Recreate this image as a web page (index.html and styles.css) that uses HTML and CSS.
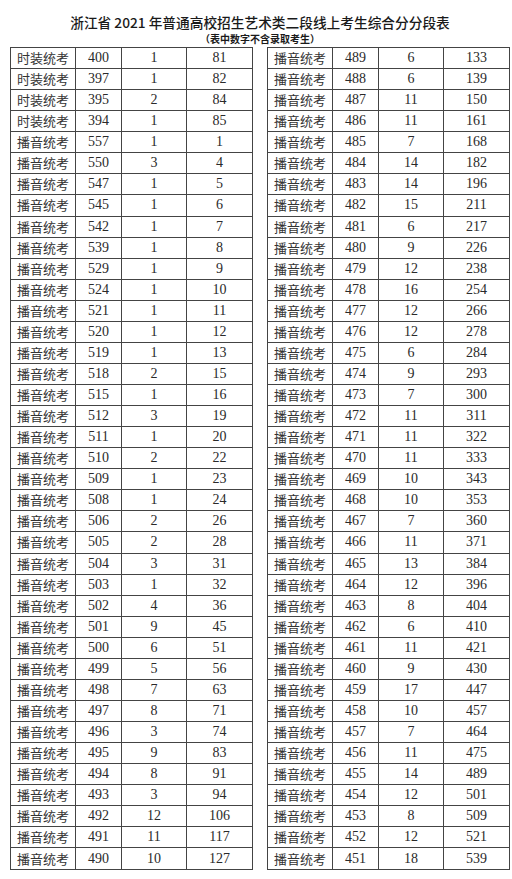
FILE: index.html
```html
<!DOCTYPE html>
<html lang="zh">
<head>
<meta charset="utf-8">
<link rel="stylesheet" href="styles.css">
</head>
<body>
<div class="page">
  <h1 class="title">浙江省 2021 年普通高校招生艺术类二段线上考生综合分分段表</h1>
  <p class="subtitle">（表中数字不含录取考生）</p>
  <div class="tables">
    <table class="grid">
      <tr><td class="cat">时装统考</td><td>400</td><td>1</td><td>81</td></tr>
      <tr><td class="cat">时装统考</td><td>397</td><td>1</td><td>82</td></tr>
      <tr><td class="cat">时装统考</td><td>395</td><td>2</td><td>84</td></tr>
      <tr><td class="cat">时装统考</td><td>394</td><td>1</td><td>85</td></tr>
      <tr><td class="cat">播音统考</td><td>557</td><td>1</td><td>1</td></tr>
      <tr><td class="cat">播音统考</td><td>550</td><td>3</td><td>4</td></tr>
      <tr><td class="cat">播音统考</td><td>547</td><td>1</td><td>5</td></tr>
      <tr><td class="cat">播音统考</td><td>545</td><td>1</td><td>6</td></tr>
      <tr><td class="cat">播音统考</td><td>542</td><td>1</td><td>7</td></tr>
      <tr><td class="cat">播音统考</td><td>539</td><td>1</td><td>8</td></tr>
      <tr><td class="cat">播音统考</td><td>529</td><td>1</td><td>9</td></tr>
      <tr><td class="cat">播音统考</td><td>524</td><td>1</td><td>10</td></tr>
      <tr><td class="cat">播音统考</td><td>521</td><td>1</td><td>11</td></tr>
      <tr><td class="cat">播音统考</td><td>520</td><td>1</td><td>12</td></tr>
      <tr><td class="cat">播音统考</td><td>519</td><td>1</td><td>13</td></tr>
      <tr><td class="cat">播音统考</td><td>518</td><td>2</td><td>15</td></tr>
      <tr><td class="cat">播音统考</td><td>515</td><td>1</td><td>16</td></tr>
      <tr><td class="cat">播音统考</td><td>512</td><td>3</td><td>19</td></tr>
      <tr><td class="cat">播音统考</td><td>511</td><td>1</td><td>20</td></tr>
      <tr><td class="cat">播音统考</td><td>510</td><td>2</td><td>22</td></tr>
      <tr><td class="cat">播音统考</td><td>509</td><td>1</td><td>23</td></tr>
      <tr><td class="cat">播音统考</td><td>508</td><td>1</td><td>24</td></tr>
      <tr><td class="cat">播音统考</td><td>506</td><td>2</td><td>26</td></tr>
      <tr><td class="cat">播音统考</td><td>505</td><td>2</td><td>28</td></tr>
      <tr><td class="cat">播音统考</td><td>504</td><td>3</td><td>31</td></tr>
      <tr><td class="cat">播音统考</td><td>503</td><td>1</td><td>32</td></tr>
      <tr><td class="cat">播音统考</td><td>502</td><td>4</td><td>36</td></tr>
      <tr><td class="cat">播音统考</td><td>501</td><td>9</td><td>45</td></tr>
      <tr><td class="cat">播音统考</td><td>500</td><td>6</td><td>51</td></tr>
      <tr><td class="cat">播音统考</td><td>499</td><td>5</td><td>56</td></tr>
      <tr><td class="cat">播音统考</td><td>498</td><td>7</td><td>63</td></tr>
      <tr><td class="cat">播音统考</td><td>497</td><td>8</td><td>71</td></tr>
      <tr><td class="cat">播音统考</td><td>496</td><td>3</td><td>74</td></tr>
      <tr><td class="cat">播音统考</td><td>495</td><td>9</td><td>83</td></tr>
      <tr><td class="cat">播音统考</td><td>494</td><td>8</td><td>91</td></tr>
      <tr><td class="cat">播音统考</td><td>493</td><td>3</td><td>94</td></tr>
      <tr><td class="cat">播音统考</td><td>492</td><td>12</td><td>106</td></tr>
      <tr><td class="cat">播音统考</td><td>491</td><td>11</td><td>117</td></tr>
      <tr><td class="cat">播音统考</td><td>490</td><td>10</td><td>127</td></tr>
    </table>
    <table class="grid">
      <tr><td class="cat">播音统考</td><td>489</td><td>6</td><td>133</td></tr>
      <tr><td class="cat">播音统考</td><td>488</td><td>6</td><td>139</td></tr>
      <tr><td class="cat">播音统考</td><td>487</td><td>11</td><td>150</td></tr>
      <tr><td class="cat">播音统考</td><td>486</td><td>11</td><td>161</td></tr>
      <tr><td class="cat">播音统考</td><td>485</td><td>7</td><td>168</td></tr>
      <tr><td class="cat">播音统考</td><td>484</td><td>14</td><td>182</td></tr>
      <tr><td class="cat">播音统考</td><td>483</td><td>14</td><td>196</td></tr>
      <tr><td class="cat">播音统考</td><td>482</td><td>15</td><td>211</td></tr>
      <tr><td class="cat">播音统考</td><td>481</td><td>6</td><td>217</td></tr>
      <tr><td class="cat">播音统考</td><td>480</td><td>9</td><td>226</td></tr>
      <tr><td class="cat">播音统考</td><td>479</td><td>12</td><td>238</td></tr>
      <tr><td class="cat">播音统考</td><td>478</td><td>16</td><td>254</td></tr>
      <tr><td class="cat">播音统考</td><td>477</td><td>12</td><td>266</td></tr>
      <tr><td class="cat">播音统考</td><td>476</td><td>12</td><td>278</td></tr>
      <tr><td class="cat">播音统考</td><td>475</td><td>6</td><td>284</td></tr>
      <tr><td class="cat">播音统考</td><td>474</td><td>9</td><td>293</td></tr>
      <tr><td class="cat">播音统考</td><td>473</td><td>7</td><td>300</td></tr>
      <tr><td class="cat">播音统考</td><td>472</td><td>11</td><td>311</td></tr>
      <tr><td class="cat">播音统考</td><td>471</td><td>11</td><td>322</td></tr>
      <tr><td class="cat">播音统考</td><td>470</td><td>11</td><td>333</td></tr>
      <tr><td class="cat">播音统考</td><td>469</td><td>10</td><td>343</td></tr>
      <tr><td class="cat">播音统考</td><td>468</td><td>10</td><td>353</td></tr>
      <tr><td class="cat">播音统考</td><td>467</td><td>7</td><td>360</td></tr>
      <tr><td class="cat">播音统考</td><td>466</td><td>11</td><td>371</td></tr>
      <tr><td class="cat">播音统考</td><td>465</td><td>13</td><td>384</td></tr>
      <tr><td class="cat">播音统考</td><td>464</td><td>12</td><td>396</td></tr>
      <tr><td class="cat">播音统考</td><td>463</td><td>8</td><td>404</td></tr>
      <tr><td class="cat">播音统考</td><td>462</td><td>6</td><td>410</td></tr>
      <tr><td class="cat">播音统考</td><td>461</td><td>11</td><td>421</td></tr>
      <tr><td class="cat">播音统考</td><td>460</td><td>9</td><td>430</td></tr>
      <tr><td class="cat">播音统考</td><td>459</td><td>17</td><td>447</td></tr>
      <tr><td class="cat">播音统考</td><td>458</td><td>10</td><td>457</td></tr>
      <tr><td class="cat">播音统考</td><td>457</td><td>7</td><td>464</td></tr>
      <tr><td class="cat">播音统考</td><td>456</td><td>11</td><td>475</td></tr>
      <tr><td class="cat">播音统考</td><td>455</td><td>14</td><td>489</td></tr>
      <tr><td class="cat">播音统考</td><td>454</td><td>12</td><td>501</td></tr>
      <tr><td class="cat">播音统考</td><td>453</td><td>8</td><td>509</td></tr>
      <tr><td class="cat">播音统考</td><td>452</td><td>12</td><td>521</td></tr>
      <tr><td class="cat">播音统考</td><td>451</td><td>18</td><td>539</td></tr>
    </table>
  </div>
</div>
</body>
</html>
```
FILE: styles.css
```css
html, body {
  margin: 0;
  padding: 0;
  background: #ffffff;
}
.page {
  width: 500px;
  margin-left: 10px;
  color: #222222;
}
.title {
  margin: 13px 0 0 0;
  font-family: "Noto Sans CJK SC", sans-serif;
  font-size: 13.7px;
  line-height: 19px;
  font-weight: 500;
  text-align: center;
  color: #1a1a1a;
}
.subtitle {
  margin: 0;
  font-family: "Noto Sans CJK SC", sans-serif;
  font-size: 10px;
  line-height: 13px;
  font-weight: 700;
  text-align: center;
  color: #1a1a1a;
}
.tables {
  display: flex;
  justify-content: space-between;
  margin-top: 2px;
}
.grid {
  width: 238px;
  height: 823px;
  border-collapse: collapse;
  table-layout: fixed;
  border: 1.5px solid #333333;
}
.grid td {
  border: 1px solid #444444;
  padding: 0;
  text-align: center;
  vertical-align: middle;
  font-family: "Liberation Serif", serif;
  font-size: 14px;
  line-height: 16px;
  color: #2a2a2a;
}
.grid td:nth-child(1) { width: 64px; }
.grid td:nth-child(2) { width: 45px; }
.grid td:nth-child(3) { width: 64px; }
.grid td:nth-child(4) { width: 65px; }
.grid td.cat {
  font-family: "Noto Sans CJK SC", sans-serif;
  font-size: 13px;
  font-weight: 400;
  color: #333333;
}
```
